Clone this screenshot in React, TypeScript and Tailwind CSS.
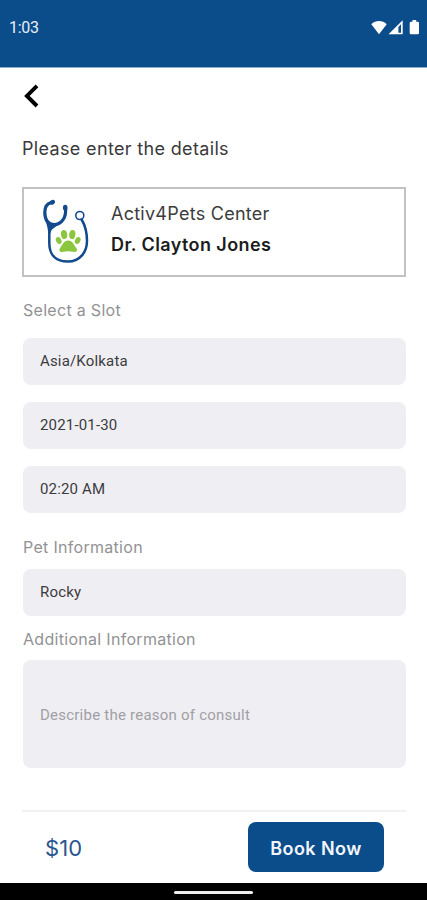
import React from "react";

const label = "pl-px font-[Inter,sans-serif] text-[16px] leading-5 tracking-[0.3px] text-[#929294]";

function StatusIcons() {
  return (
    <svg className="h-4 w-[52px]" viewBox="0.5 0 52 16" fill="#fff">
      <path d="M0.8 4.3 C5 0 12 0 16.2 4.3 L8.5 14.2 Z" />
      <path fillRule="evenodd" d="M18 14.2 H32.2 V0.2 Z M27.9 12.8 V7 L30.5 4.3 V12.8 Z" />
      <path d="M40.6 1.7 H42 V0 H45.7 V1.7 H47.1 Q48.5 1.7 48.5 2.9 V13 Q48.5 14.2 47.3 14.2 H40.4 Q39.2 14.2 39.2 13 V2.9 Q39.2 1.7 40.6 1.7 Z" />
    </svg>
  );
}

function Logo() {
  return (
    <svg className="h-[66px] w-[48px] shrink-0" viewBox="0 0 48 66" fill="none">
      <g stroke="#124a8d" strokeLinecap="round">
        <path d="M9.5 3.5 C4.5 4.5 2.8 9 2.8 13.5 C3 21 6 25.5 12 25.5 C20 25.5 24.5 18 23.5 9" strokeWidth="3.2" />
        <path d="M7.3 29 V44 C7.3 56 14 62.6 26 62.6 C38 62.6 45 53 45 42 C45 34 43.5 27 39.6 20.5" strokeWidth="2.5" />
        <circle cx="37.8" cy="16.5" r="4" strokeWidth="1.6" />
      </g>
      <g fill="#124a8d">
        <path d="M3 20 C7 25 13 26 19.5 23 C16 28 9.5 28 8.5 34 H6.2 C6 29 4.5 25 3 20 Z" />
        <ellipse cx="10.3" cy="3.3" rx="2.8" ry="2.3" transform="rotate(-25 10.3 3.3)" />
        <ellipse cx="23.2" cy="8.7" rx="2.3" ry="2.9" />
      </g>
      <g fill="#8cc63f" transform="translate(-0.3 -0.5)">
        <ellipse cx="17" cy="42" rx="2.6" ry="3.6" transform="rotate(-28 17 42)" />
        <ellipse cx="22.4" cy="36" rx="3.1" ry="4.6" transform="rotate(-8 22.4 36)" />
        <ellipse cx="30.6" cy="36" rx="3.1" ry="4.6" transform="rotate(8 30.6 36)" />
        <ellipse cx="36" cy="42" rx="2.6" ry="3.6" transform="rotate(28 36 42)" />
        <path d="M26.5 42 C31 42 32.5 47 34.6 49.4 C36.6 52 34 54.4 31.5 53.3 C28 52.6 25 52.6 21.5 53.3 C19 54.4 16.4 52 18.4 49.4 C20.5 47 22 42 26.5 42 Z" />
      </g>
    </svg>
  );
}

function Field({ children }: { children: React.ReactNode }) {
  return (
    <div className="ml-px flex h-[47px] items-center rounded-lg bg-[#efeef3] px-[17px] text-[15px] tracking-[0.17px] text-[#3c3c40]">
      {children}
    </div>
  );
}

export default function App() {
  return (
    <div className="flex h-[900px] w-[427px] flex-col overflow-hidden bg-white font-[Roboto,sans-serif]">
      <header className="flex h-[68px] shrink-0 items-start justify-between border-b border-[#8da9cb] bg-[#0b4c8a] pl-[9px] pr-[4px] pt-[18px] text-white">
        <span className="text-[16px] leading-5 tracking-[-0.3px] text-[#e6eef8]">1:03</span>
        <span className="pt-0.5"><StatusIcons /></span>
      </header>

      <main className="flex flex-1 flex-col pl-[22px] pr-[21px]">
        <svg className="mt-4 h-6 w-5" viewBox="0 0 20 24" fill="none" stroke="#000" strokeWidth="3.9">
          <path d="M15 1.8 L4.9 11.9 L15 22" />
        </svg>
        <h1 className="mt-[29px] font-[Inter,sans-serif] text-[18px] leading-6 tracking-[0.34px] text-[#3a3a3a]">
          Please enter the details
        </h1>

        <section className="mt-[26px] flex h-[90px] items-center border-2 border-[#c2c2c2] pl-[18px]">
          <Logo />
          <div className="ml-[21px] pb-[7px] font-[Inter,sans-serif] text-[18px] leading-[31px]">
            <p className="tracking-[0.26px] text-[#3c3c3c]">Activ4Pets Center</p>
            <p className="font-semibold tracking-[0.4px] text-[#1c1c1c]">Dr. Clayton Jones</p>
          </div>
        </section>

        <h2 className={`mt-[23px] ${label}`}>Select a Slot</h2>
        <div className="mt-[18px] flex flex-col gap-[17px]">
          <Field>Asia/Kolkata</Field>
          <Field>2021-01-30</Field>
          <Field>02:20 AM</Field>
        </div>

        <h2 className={`mt-6 ${label}`}>Pet Information</h2>
        <div className="mt-3"><Field>Rocky</Field></div>

        <h2 className={`mt-[13px] ${label}`}>Additional Information</h2>
        <div className="ml-px mt-[11px] flex h-[108px] items-center rounded-lg bg-[#efeef3] px-[17px] pt-[3px] text-[15px] tracking-[0.23px] text-[#a0a0a4]">
          Describe the reason of consult
        </div>

        <footer className="mt-[42px] flex items-center justify-between border-t-2 border-[#f2f2f2] pl-[23px] pr-[22px] pt-[10px]">
          <span className="pt-0.5 font-[Inter,sans-serif] text-[22px] tracking-[0.1px] text-[#2a5690]">$10</span>
          <button className="h-[50px] w-[136px] rounded-lg bg-[#0b4c8a] pt-0.5 font-[Inter,sans-serif] text-[18px] font-semibold tracking-[0.45px] text-[#f2f5fc]">
            Book Now
          </button>
        </footer>
      </main>

      <nav className="flex h-[17px] shrink-0 justify-center bg-black pt-2">
        <div className="h-[3px] w-[79px] rounded-full bg-[#eeeeee]" />
      </nav>
    </div>
  );
}
